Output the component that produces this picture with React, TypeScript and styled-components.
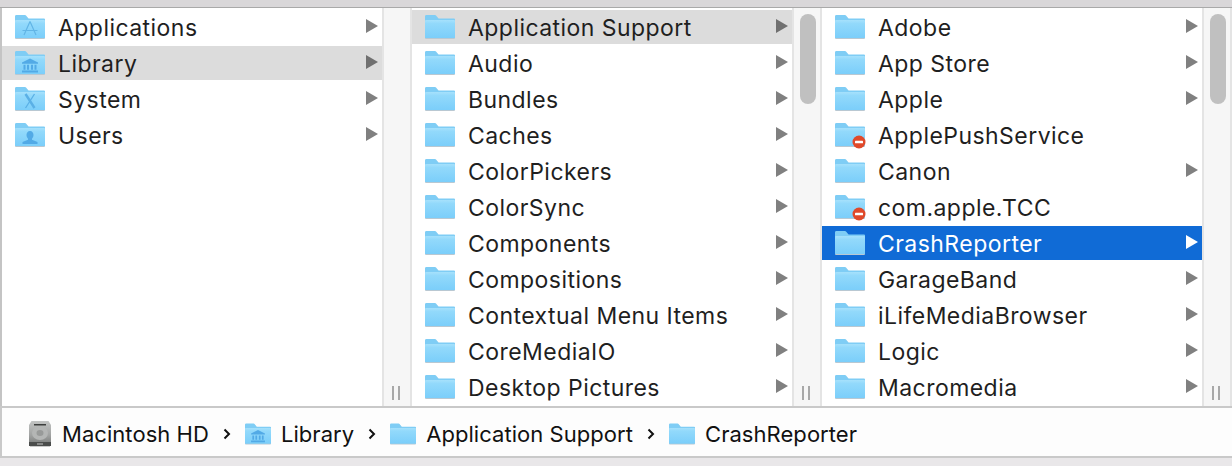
import React from "react";
import styled, { createGlobalStyle } from "styled-components";

const Global = createGlobalStyle`
  html, body { margin: 0; padding: 0; background: #e9e7e9; }
  body { width: 1232px; height: 466px; overflow: hidden; font-family: Inter, "Liberation Sans", sans-serif; }
`;

const Page = styled.div`
  display: flex;
  flex-direction: column;
  width: 1232px;
  height: 466px;
  background: #e9e7e9;
`;
const TitleEdge = styled.div`
  height: 7px;
  background: #d9d7d9;
  border-bottom: 1px solid #a9a9a9;
`;
const Browser = styled.div`
  display: flex;
  height: 398px;
  border-left: 2px solid #c4c4c4;
  background: #e4e4e4;
  overflow: hidden;
`;
const Column = styled.div`
  display: flex;
  width: 410px;
  flex: none;
`;
const List = styled.ul`
  list-style: none;
  margin: 0;
  padding: 2px 0 0;
  width: 380px;
  flex: none;
  background: #fff;
  display: flex;
  flex-direction: column;
  gap: 2px;
`;
const Row = styled.li<{ $state?: "active" | "muted" }>`
  display: flex;
  align-items: center;
  height: 34px;
  padding: 0 4px 0 13px;
  background: ${(p) => (p.$state === "active" ? "#106bd6" : p.$state === "muted" ? "#dcdcdc" : "transparent")};
  color: ${(p) => (p.$state === "active" ? "#fff" : "#1f1f1f")};
  font-size: 23px;
  letter-spacing: 0.45px;
`;
const RowIcon = styled.span`
  width: 30px;
  height: 24px;
  flex: none;
  display: block;
`;
const RowLabel = styled.span`
  margin-left: 13px;
  padding-top: 2px;
  flex: 1;
  line-height: 34px;
  white-space: nowrap;
`;
const Arrow = styled.svg`
  width: 12px;
  height: 14px;
  flex: none;
  display: block;
  margin-top: -2px;
`;
const Gutter = styled.div`
  width: 28px;
  flex: none;
  box-sizing: border-box;
  background: #f6f6f6;
  border-left: 2px solid #e4e4e4;
  display: flex;
  flex-direction: column;
  align-items: center;
  padding: 6px 0 6px;
`;
const Thumb = styled.div<{ $h: number }>`
  width: 16px;
  height: ${(p) => p.$h}px;
  margin-left: 2px;
  border-radius: 8px;
  background: #c0c0c0;
`;
const Grip = styled.div`
  margin-top: auto;
  margin-right: 2px;
  display: flex;
  gap: 4px;
`;
const GripBar = styled.i`
  display: block;
  width: 2px;
  height: 14px;
  background: #a8a8a8;
`;
const PathBar = styled.div`
  height: 45px;
  padding: 3px 0 0 26px;
  display: flex;
  align-items: center;
  background: #fdfdfd;
  border-top: 2px solid #c9c9c9;
  border-bottom: 2px solid #c9c9c9;
  border-left: 2px solid #c9c9c9;
  color: #111;
  font-size: 22px;
  letter-spacing: 0.05px;
`;
const Crumb = styled.span`
  display: flex;
  align-items: center;
  gap: 10px;
  white-space: nowrap;
`;
const Chevron = styled.svg`
  width: 8px;
  height: 12px;
  flex: none;
  margin: 0 14px;
`;
const CrumbFolder = styled.span`
  display: block;
  width: 26px;
  height: 22px;
  flex: none;
`;

type Glyph = "none" | "apps" | "library" | "x" | "user";

const Folder = ({ id, glyph = "none", blocked = false }: { id: string; glyph?: Glyph; blocked?: boolean }) => (
  <svg width="100%" height="100%" viewBox="0 0 30 24" style={{ display: "block", overflow: "visible" }}>
    <defs>
      <linearGradient id={id} x1="0" y1="0" x2="0" y2="1">
        <stop offset="0" stopColor="#a6e1fc" />
        <stop offset="0.2" stopColor="#92d9fb" />
        <stop offset="1" stopColor="#7bcefa" />
      </linearGradient>
    </defs>
    <path d="M1 24h28a1 1 0 0 0 1-1V5a1 1 0 0 0-1-1H13.500L11 1.400A1.400 1.400 0 0 0 10 1H1.400A1.400 1.400 0 0 0 0 2.400V23a1 1 0 0 0 1 1z" fill="#b9c8d2" />
    <path d="M1 23h28a1 1 0 0 0 1-1V4.500a1 1 0 0 0-1-1H13.500L11 .6A1.400 1.400 0 0 0 10 0H1.400A1.400 1.400 0 0 0 0 1.400V22a1 1 0 0 0 1 1z" fill="#7fcdf5" />
    <path d="M0 6a1 1 0 0 1 1-1h28a1 1 0 0 1 1 1V22a1 1 0 0 1-1 1H1a1 1 0 0 1-1-1z" fill={`url(#${id})`} />
    {glyph === "apps" && (
      <g fill="none" stroke="#62b5e6" strokeWidth="1.200">
        <path d="M15 6.500 9 20M15 6.500 21 20M7.500 15.500h15" />
      </g>
    )}
    {glyph === "library" && (
      <g fill="#52aae6">
        <path d="M15 7.500 23 11.500v1.200H7v-1.200z" />
        <path d="M8.500 13.700h2v5h-2zM12 13.700h2v5h-2zM16 13.700h2v5h-2zM19.500 13.700h2v5h-2zM7 19.500h16v2H7z" />
      </g>
    )}
    {glyph === "x" && (
      <g fill="none" stroke="#5ab0e6">
        <path d="M10.500 7 19.500 21" strokeWidth="2.400" />
        <path d="M19.500 7 10.500 21" strokeWidth="1.300" />
      </g>
    )}
    {glyph === "user" && (
      <path d="M15 8c2.200 0 3.500 1.800 3.500 4 0 1.700-.9 3-1.500 3.800v1l5.500 2.200V21h-15v-2l5.500-2.200v-1c-.6-.8-1.500-2.100-1.500-3.800 0-2.200 1.300-4 3.500-4z" fill="#52aae6" />
    )}
    {blocked && (
      <g>
        <circle cx="24" cy="19" r="6.500" fill="#e0492a" />
        <rect x="20" y="17.700" width="8" height="2.600" rx="0.600" fill="#fff" />
      </g>
    )}
  </svg>
);

const Disk = () => (
  <svg width="24" height="26" viewBox="0 0 24 26" style={{ display: "block", flex: "none" }}>
    <defs>
      <linearGradient id="disk" x1="0" y1="0" x2="0" y2="1">
        <stop offset="0" stopColor="#c2c4c3" />
        <stop offset="0.6" stopColor="#a2a4a3" />
        <stop offset="1" stopColor="#7c7e7d" />
      </linearGradient>
    </defs>
    <path d="M3.500 0h17L23 4v19H1V4z" fill="url(#disk)" />
    <rect x="1" y="21" width="22" height="4" fill="#4a4c4b" />
    <rect x="2" y="25" width="20" height="1" fill="#c8c8c8" />
    <ellipse cx="12" cy="12" rx="8" ry="7" fill="#b4b6b5" />
    <ellipse cx="12" cy="12" rx="3.500" ry="3" fill="#989a99" />
    <rect x="6" y="3" width="12" height="1.500" fill="#3c3e3d" />
    <rect x="9" y="22.500" width="6" height="1" fill="#c4c4c4" />
  </svg>
);

type Item = { name: string; glyph?: Glyph; arrow?: boolean; blocked?: boolean; state?: "active" | "muted" };

const col1: Item[] = [
  { name: "Applications", glyph: "apps", arrow: true },
  { name: "Library", glyph: "library", arrow: true, state: "muted" },
  { name: "System", glyph: "x", arrow: true },
  { name: "Users", glyph: "user", arrow: true },
];
const col2: Item[] = [
  { name: "Application Support", arrow: true, state: "muted" },
  ...["Audio", "Bundles", "Caches", "ColorPickers", "ColorSync", "Components", "Compositions", "Contextual Menu Items", "CoreMediaIO", "Desktop Pictures"].map((name) => ({ name, arrow: true })),
];
const col3: Item[] = [
  { name: "Adobe", arrow: true },
  { name: "App Store", arrow: true },
  { name: "Apple", arrow: true },
  { name: "ApplePushService", blocked: true },
  { name: "Canon", arrow: true },
  { name: "com.apple.TCC", blocked: true },
  { name: "CrashReporter", arrow: true, state: "active" },
  { name: "GarageBand", arrow: true },
  { name: "iLifeMediaBrowser", arrow: true },
  { name: "Logic", arrow: true },
  { name: "Macromedia", arrow: true },
];

const BrowserColumn = ({ tag, items, thumb }: { tag: string; items: Item[]; thumb?: number }) => (
  <Column>
    <List>
      {items.map((it, i) => (
        <Row key={it.name} $state={it.state}>
          <RowIcon>
            <Folder id={`${tag}-${i}`} glyph={it.glyph} blocked={it.blocked} />
          </RowIcon>
          <RowLabel>{it.name}</RowLabel>
          {it.arrow && (
            <Arrow viewBox="0 0 12 14">
              <path d="M0 0 12 7 0 14z" fill={it.state === "active" ? "#fff" : it.state === "muted" ? "#707070" : "#808080"} />
            </Arrow>
          )}
        </Row>
      ))}
    </List>
    <Gutter>
      {thumb ? <Thumb $h={thumb} /> : null}
      <Grip>
        <GripBar />
        <GripBar />
      </Grip>
    </Gutter>
  </Column>
);

const Sep = () => (
  <Chevron viewBox="0 0 8 12">
    <path d="M1.500 1.500 6 6l-4.500 4.500" fill="none" stroke="#111" strokeWidth="2" />
  </Chevron>
);

export default function App() {
  return (
    <Page>
      <Global />
      <TitleEdge />
      <Browser>
        <BrowserColumn tag="a" items={col1} />
        <BrowserColumn tag="b" items={col2} thumb={90} />
        <BrowserColumn tag="c" items={col3} thumb={90} />
      </Browser>
      <PathBar>
        <Crumb>
          <Disk />
          Macintosh HD
        </Crumb>
        <Sep />
        <Crumb>
          <CrumbFolder><Folder id="p1" glyph="library" /></CrumbFolder>
          Library
        </Crumb>
        <Sep />
        <Crumb>
          <CrumbFolder><Folder id="p2" /></CrumbFolder>
          Application Support
        </Crumb>
        <Sep />
        <Crumb>
          <CrumbFolder><Folder id="p3" /></CrumbFolder>
          CrashReporter
        </Crumb>
      </PathBar>
    </Page>
  );
}
